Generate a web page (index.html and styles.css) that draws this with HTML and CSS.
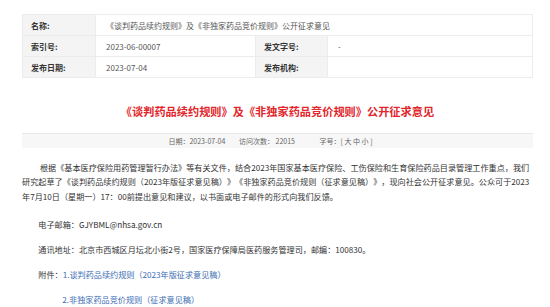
FILE: index.html
```html
<!DOCTYPE html>
<html lang="zh-CN">

<head>
    <meta charset="UTF-8">
    <meta name="viewport" content="width=device-width, initial-scale=1.0">
    <title>公开征求意见</title>
    <link rel="stylesheet" href="styles.css">
</head>

<body>
    <div class="page">
        <table class="info">
            <colgroup>
                <col class="col-label">
                <col class="col-value">
                <col class="col-label2">
                <col>
            </colgroup>
            <tr>
                <th>名称:</th>
                <td colspan="3">《谈判药品续约规则》及《非独家药品竞价规则》公开征求意见</td>
            </tr>
            <tr>
                <th>索引号:</th>
                <td>2023-06-00007</td>
                <th>发文字号:</th>
                <td>-</td>
            </tr>
            <tr>
                <th>发布日期:</th>
                <td>2023-07-04</td>
                <th>发布机构:</th>
                <td></td>
            </tr>
        </table>

        <h1 class="title">《谈判药品续约规则》及《非独家药品竞价规则》公开征求意见</h1>

        <div class="meta">
            <span>日期：2023-07-04</span>
            <span class="visits">访问次数： 22015</span>
            <span>字号：[ 大 中 小 ]</span>
        </div>

        <div class="content">
            <p class="lead">根据《基本医疗保险用药管理暂行办法》等有关文件，结合2023年国家基本医疗保险、工伤保险和生育保险药品目录管理工作重点，我们研究起草了《谈判药品续约规则（2023年版征求意见稿）》《非独家药品竞价规则（征求意见稿）》，现向社会公开征求意见。公众可于2023年7月10日（星期一）17：00前提出意见和建议，以书面或电子邮件的形式向我们反馈。</p>
            <p>电子邮箱：GJYBML@nhsa.gov.cn</p>
            <p>通讯地址：北京市西城区月坛北小街2号，国家医疗保障局医药服务管理司，邮编：100830。</p>
            <p>附件：<a href="#">1.谈判药品续约规则（2023年版征求意见稿）</a></p>
            <p class="more"><a href="#">2.非独家药品竞价规则（征求意见稿）</a></p>
        </div>
    </div>
</body>

</html>
```

FILE: styles.css
```css
* {
    margin: 0;
    padding: 0;
    box-sizing: border-box;
}

body {
    font-family: "Noto Sans CJK SC", "Noto Sans", sans-serif;
    color: #333;
    background: #fff;
}

.page {
    width: 511px;
    margin-left: 22px;
    padding-top: 14px;
}

.info {
    width: 100%;
    border-collapse: collapse;
    font-size: 8px;
    table-layout: fixed;
}

.col-label {
    width: 73px;
}

.col-value {
    width: 160px;
}

.col-label2 {
    width: 72px;
}

.info th,
.info td {
    height: 21px;
    border: 1px solid #ececec;
    padding: 0 8px;
    text-align: left;
    white-space: nowrap;
}

.info th {
    background: #f4f4f4;
    color: #333;
    font-weight: bold;
}

.info td {
    color: #555;
    padding-left: 10px;
}

.title {
    margin-top: 25px;
    text-align: center;
    font-size: 11.2px;
    line-height: 16px;
    font-weight: bold;
    color: #e2262b;
}

.meta {
    margin-top: 14px;
    height: 15px;
    line-height: 14px;
    padding-right: 14px;
    border-top: 1px solid #e8e8e8;
    background: #f7f7f7;
    text-align: center;
    font-size: 7px;
    color: #666;
}

.meta span {
    margin: 0 6px;
}

.meta .visits {
    margin-right: 17px;
}

.content {
    margin-top: 12.5px;
    font-size: 8.15px;
    line-height: 14.5px;
    color: #333;
    text-spacing-trim: space-all;
}

.content p {
    text-indent: 2em;
    margin-bottom: 10.5px;
}

.content p.lead {
    text-indent: 2.2em;
    margin-bottom: 13.5px;
}

.content p.more {
    padding-left: 24px;
}

.content a {
    color: #3b6db4;
    text-decoration: none;
}
```
